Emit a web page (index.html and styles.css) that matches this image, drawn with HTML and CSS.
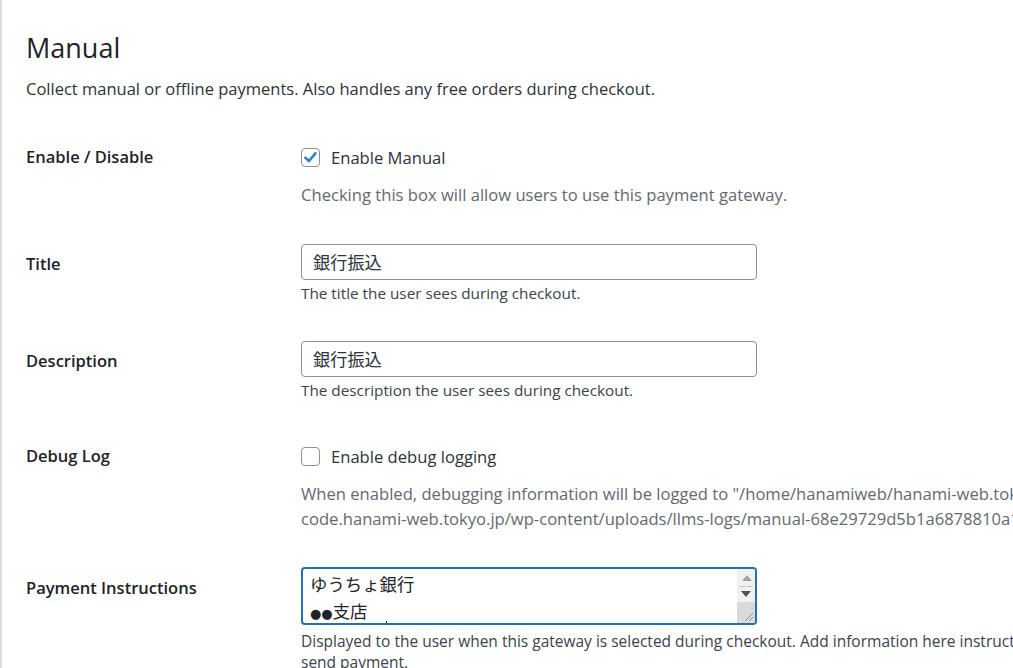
FILE: index.html
```html
<!DOCTYPE html>
<html lang="en">
<head>
<meta charset="utf-8">
<title>Manual</title>
<link rel="stylesheet" href="styles.css">
</head>
<body>
<div class="panel">
  <h2 class="heading">Manual</h2>
  <p class="intro">Collect manual or offline payments. Also handles any free orders during checkout.</p>

  <div class="row row-enable">
    <div class="label label-check">Enable / Disable</div>
    <div class="field">
      <label class="check-line">
        <span class="box checked"><svg viewBox="0 0 20 20" width="19" height="19"><path d="M4 10.2 L8.2 14.2 L15.8 5" fill="none" stroke="#3582c4" stroke-width="3.2" stroke-linecap="round" stroke-linejoin="round"/></svg></span>
        <span class="check-text">Enable Manual</span>
      </label>
      <p class="desc-lg">Checking this box will allow users to use this payment gateway.</p>
    </div>
  </div>

  <div class="row row-title">
    <div class="label label-input">Title</div>
    <div class="field">
      <div class="input">銀行振込</div>
      <p class="desc-sm">The title the user sees during checkout.</p>
    </div>
  </div>

  <div class="row row-desc">
    <div class="label label-input">Description</div>
    <div class="field">
      <div class="input">銀行振込</div>
      <p class="desc-sm">The description the user sees during checkout.</p>
    </div>
  </div>

  <div class="row row-debug">
    <div class="label label-check">Debug Log</div>
    <div class="field">
      <label class="check-line">
        <span class="box"></span>
        <span class="check-text">Enable debug logging</span>
      </label>
      <p class="desc-lg desc-wrap">When enabled, debugging information will be logged to "/home/hanamiweb/hanami-web.tokyo.jp/public_html/<br>code.hanami-web.tokyo.jp/wp-content/uploads/llms-logs/manual-68e29729d5b1a6878810a1b2c3.log"</p>
    </div>
  </div>

  <div class="row row-pay">
    <div class="label label-area">Payment Instructions</div>
    <div class="field">
      <div class="textarea">
        <div class="ta-text">ゆうちょ銀行<br><span class="dots">●●</span>支店<br><span class="caret"></span></div>
        <div class="scrollbar">
          <div class="sb-up"></div>
          <div class="sb-down"></div>
          <div class="sb-thumb">
            <svg class="grip" viewBox="0 0 12 12" width="12" height="12"><path d="M11 3 L3 11 M11 7 L7 11" stroke="#8c8f94" stroke-width="1"/></svg>
          </div>
        </div>
      </div>
      <p class="desc-md desc-wrap">Displayed to the user when this gateway is selected during checkout. Add information here instructing the customer on how to<br>send payment.</p>
    </div>
  </div>
</div>
</body>
</html>
```

FILE: styles.css
```css
html, body {
  margin: 0;
  padding: 0;
  overflow: hidden;
  background: #ffffff;
}

body {
  font-family: "Open Sans", "Noto Sans", "Noto Sans CJK JP", sans-serif;
  color: #1d2327;
}

.panel {
  border-left: 2px solid #dcdcde;
  padding-left: 24px;
  height: 668px;
  box-sizing: border-box;
  padding-top: 30px;
}

.heading {
  margin: 0;
  font-size: 27px;
  font-weight: 400;
  line-height: 36px;
  color: #1d2327;
}

.intro {
  margin: 5px 0 0;
  font-size: 16.5px;
  line-height: 36px;
  color: #2c3338;
}

.row {
  display: grid;
  grid-template-columns: 275px 1fr;
}

.row-enable { margin-top: 33px; }
.row-title { margin-top: 37px; }
.row-desc { margin-top: 38px; }
.row-debug { margin-top: 39px; }
.row-pay { margin-top: 36px; }

.label {
  font-size: 16.5px;
  font-weight: 600;
  color: #1d2327;
  white-space: nowrap;
}

.label-check { line-height: 34px; }
.label-input { line-height: 24px; padding-top: 8px; }
.label-area { line-height: 24px; padding-top: 9px; }

.field {
  min-width: 0;
  white-space: nowrap;
}

.check-line {
  display: flex;
  align-items: center;
  height: 34px;
  gap: 11px;
}

.box {
  width: 19px;
  height: 19px;
  box-sizing: border-box;
  border: 1px solid #8c8f94;
  border-radius: 4px;
  display: flex;
  align-items: center;
  justify-content: center;
  background: #fff;
}

.box svg { display: block; }

.check-text {
  font-size: 16.6px;
  color: #2c3338;
}

.desc-lg {
  margin: 8px 0 0;
  font-size: 16.6px;
  line-height: 25px;
  color: #646970;
}

.desc-sm {
  margin: 3px 0 0;
  font-size: 15.3px;
  line-height: 20px;
  color: #3c434a;
}

.desc-md {
  margin: 6px 0 0;
  font-size: 15.5px;
  line-height: 21px;
  color: #3c434a;
}

.input {
  width: 456px;
  height: 36px;
  box-sizing: border-box;
  border: 1px solid #8c8f94;
  border-radius: 4px;
  padding: 0 11px;
  font-family: "Noto Sans CJK JP", sans-serif;
  font-size: 17.2px;
  line-height: 34px;
  color: #2c3338;
}

.textarea {
  width: 456px;
  height: 58px;
  box-sizing: border-box;
  border: 2px solid #2271b1;
  border-radius: 4px;
  display: flex;
  overflow: hidden;
  background: #fff;
}

.ta-text {
  flex: 1;
  padding: 1px 0 0 7px;
  font-family: "Noto Sans CJK JP", sans-serif;
  font-size: 17.4px;
  line-height: 27px;
  color: #1d2327;
  position: relative;
}

.dots {
  font-family: "DejaVu Sans", sans-serif;
  font-size: 13px;
  letter-spacing: 0;
}

.caret {
  position: absolute;
  left: 83px;
  top: 52px;
  width: 1px;
  height: 6px;
  background: #1d2327;
}

.scrollbar {
  width: 18px;
  display: flex;
  flex-direction: column;
  background: #f1f1f1;
}

.sb-up {
  height: 17px;
  border-bottom: 1px solid #c8c8c8;
  margin: 0 2px;
  position: relative;
}

.sb-up::after {
  content: "";
  position: absolute;
  left: 3px;
  top: 6px;
  border-left: 5px solid transparent;
  border-right: 5px solid transparent;
  border-bottom: 6px solid #a3a3a3;
}

.sb-down {
  height: 15px;
  position: relative;
}

.sb-down::after {
  content: "";
  position: absolute;
  left: 4px;
  top: 4px;
  border-left: 5px solid transparent;
  border-right: 5px solid transparent;
  border-top: 6px solid #505050;
}

.sb-thumb {
  flex: 1;
  background: #dadada;
  position: relative;
}

.grip {
  position: absolute;
  right: 1px;
  bottom: 1px;
}
```
